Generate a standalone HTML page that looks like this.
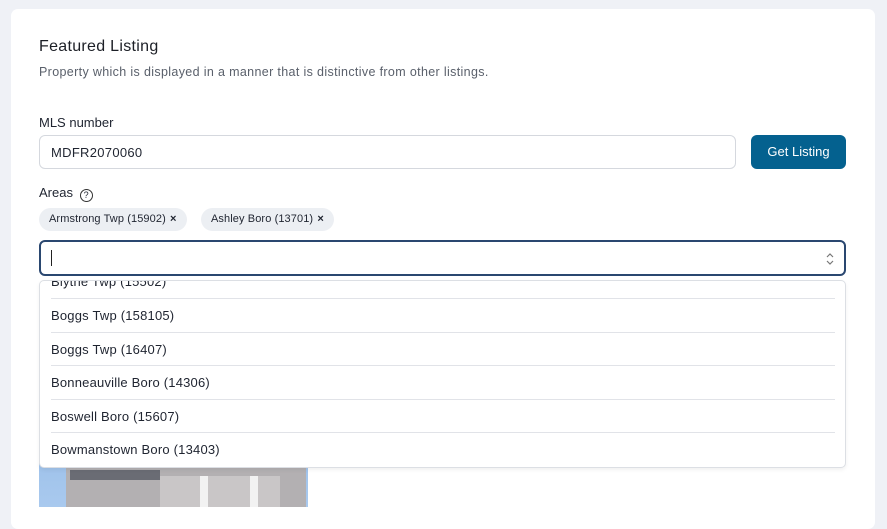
<!DOCTYPE html>
<html><head><style>
*{box-sizing:border-box;margin:0;padding:0}
body{width:887px;height:507px;overflow:hidden;background:#eff1f6;font-family:"Liberation Sans",sans-serif;color:#1f2430;position:relative}
.card{position:absolute;left:11px;top:9px;width:864px;height:520px;background:#fff;border-radius:7px}
.abs{position:absolute}
.h{left:39px;top:38px;font-size:16px;letter-spacing:0.3px;color:#1c1f26}
.sub{left:39px;top:65px;font-size:12.5px;letter-spacing:0.35px;color:#5a606b}
.lbl{font-size:13px;color:#1f2430}
.inp{left:39px;top:135px;width:697px;height:34px;border:1px solid #d5d8de;border-radius:6px;font-size:13px;padding:9px 11px;letter-spacing:.3px}
.btn{left:751px;top:135px;width:95px;height:34px;background:#04618f;color:#fff;border-radius:6px;font-size:13px;text-align:center;line-height:34px}
.chip{top:208px;height:23px;background:#eceff3;border-radius:12px;font-size:11px;letter-spacing:.1px;line-height:23px;padding:0 10px;color:#1f2430}
.sel{left:39px;top:240px;width:807px;height:36px;border:2px solid #2a4770;border-radius:6px}
.dd{left:39px;top:280px;width:807px;height:188px;border:1px solid #dcdfe4;border-radius:5px;background:#fff;overflow:hidden;box-shadow:0 2px 4px rgba(0,0,0,.06)}
.it{position:absolute;left:11px;width:784px;font-size:13px;letter-spacing:.2px;color:#1f2430;border-top:1px solid #e1e3e8;height:33px;line-height:33px}
</style></head><body>
<div class="card"></div>
<div class="abs" style="left:39px;top:315px;width:807px;height:29px;border:1px solid #d5d8de;border-radius:6px"></div>
<div class="abs" style="left:39px;top:387px;width:269px;height:120px;background:linear-gradient(#8fb8e6,#a9c9ee)"></div>
<div class="abs" style="left:66px;top:468px;width:240px;height:39px;background:#b3b0b2"></div>
<div class="abs" style="left:70px;top:470px;width:90px;height:10px;background:#6a6c74"></div>
<div class="abs" style="left:160px;top:476px;width:120px;height:31px;background:#c9c6c7"></div>
<div class="abs" style="left:200px;top:476px;width:8px;height:31px;background:#f2f2f2"></div>
<div class="abs" style="left:250px;top:476px;width:8px;height:31px;background:#f2f2f2"></div>
<div class="abs h">Featured Listing</div>
<div class="abs sub">Property which is displayed in a manner that is distinctive from other listings.</div>
<div class="abs lbl" style="left:39px;top:115px">MLS number</div>
<div class="abs inp">MDFR2070060</div>
<div class="abs btn">Get Listing</div>
<div class="abs lbl" style="left:39px;top:185px">Areas <span style="display:inline-block;width:13px;height:13px;border:1.2px solid #333;border-radius:50%;font-size:9px;line-height:11px;text-align:center;vertical-align:-1px;margin-left:3px">?</span></div>
<div class="abs chip" style="left:39px">Armstrong Twp (15902) <b style="margin-left:1px">×</b></div>
<div class="abs chip" style="left:201px">Ashley Boro (13701) <b style="margin-left:1px">×</b></div>
<div class="abs sel"><div class="abs" style="left:10px;top:8px;width:1px;height:16px;background:#222"></div>
<svg class="abs" style="left:784px;top:9px" width="10" height="16" viewBox="0 0 10 16"><path d="M2 6 5 3 8 6M2 10 5 13 8 10" fill="none" stroke="#777" stroke-width="1.2"/></svg></div>
<div class="abs dd">
<div class="it" style="top:-16px;border-top:none">Blythe Twp (15502)</div>
<div class="it" style="top:17px">Boggs Twp (158105)</div>
<div class="it" style="top:51px">Boggs Twp (16407)</div>
<div class="it" style="top:84px">Bonneauville Boro (14306)</div>
<div class="it" style="top:118px">Boswell Boro (15607)</div>
<div class="it" style="top:151px">Bowmanstown Boro (13403)</div>
</div>
</body></html>
